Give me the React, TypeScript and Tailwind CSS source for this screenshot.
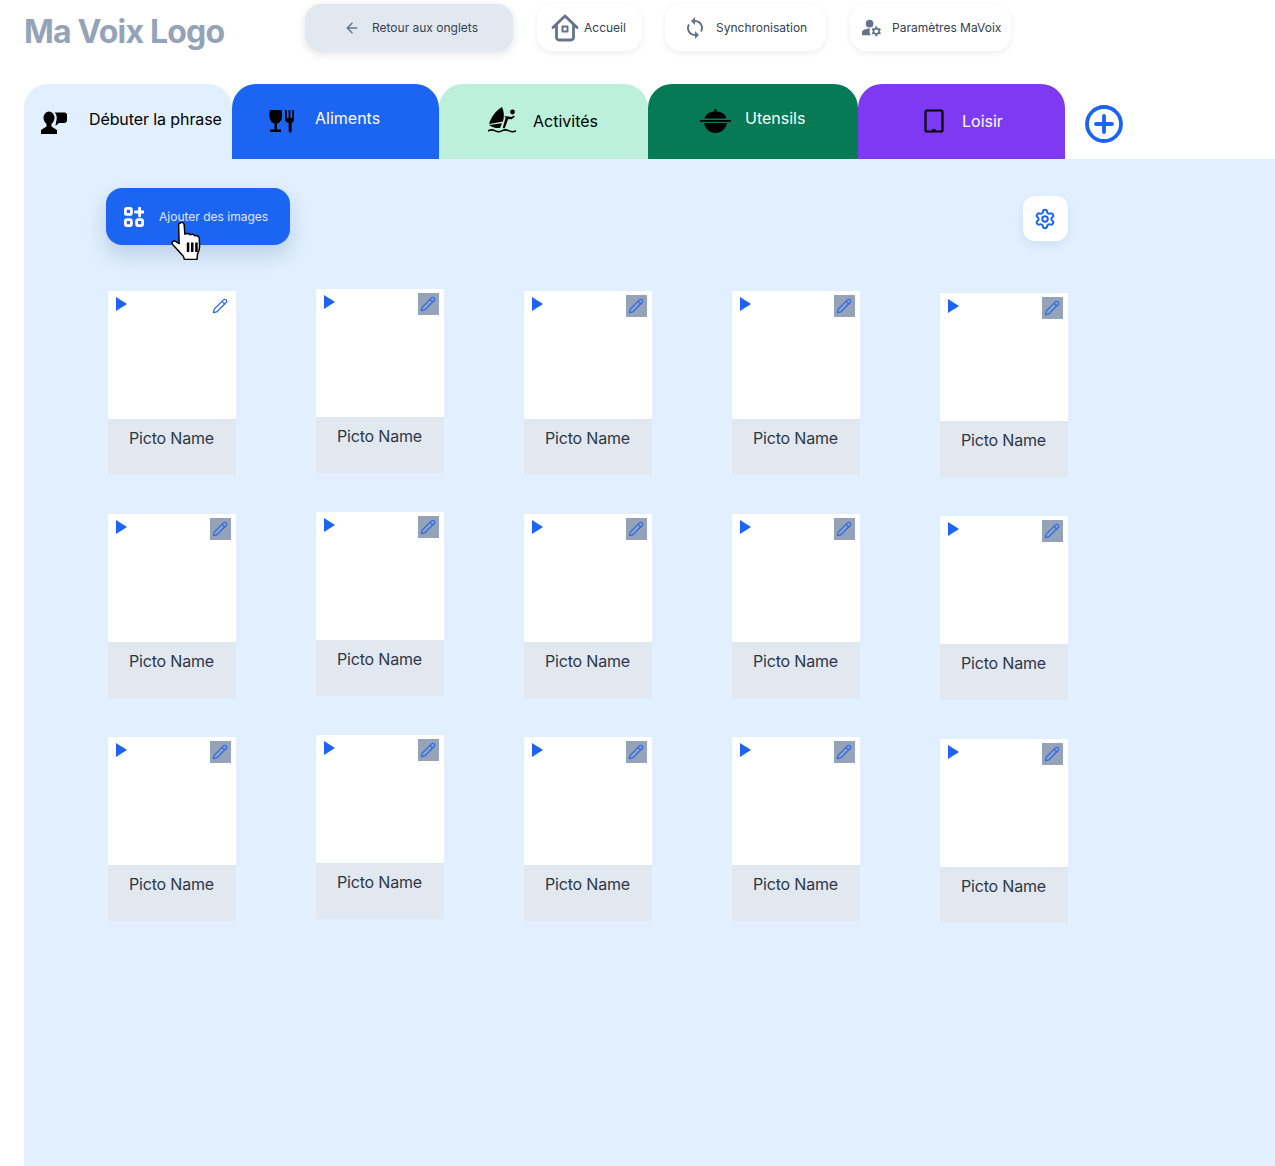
import { ArrowLeft, Pencil, Settings } from "lucide-react";
import { MdSync, MdManageAccounts } from "react-icons/md";
import type { ReactNode } from "react";

const HomeIcon = () => (
  <svg width="28" height="28" viewBox="0 0 28 28" fill="none" stroke="#64748b" strokeWidth="2.800" strokeLinejoin="round" strokeLinecap="round">
    <path d="M2 13.500 14 2l12 11.500" />
    <path d="M5.500 11v12.500a2.500 2.500 0 0 0 2.500 2.500h12a2.500 2.500 0 0 0 2.500-2.500V11" />
    <rect x="11.500" y="12.500" width="5" height="5" strokeWidth="2" />
  </svg>
);

const SpeakerIcon = () => (
  <svg width="26" height="24" viewBox="0 0 26 24" fill="#000" className="mt-[7px]">
    <ellipse cx="8" cy="7" rx="5.500" ry="6.500" />
    <path d="M5.500 12h5v3.500l5.500 3.500V23H0v-4l5.500-3.500z" />
    <path d="M13 1.500h10.500A2.500 2.500 0 0 1 26 4v5a3 3 0 0 1-3 3h-5l-3.500 3 .5-4c1-2 1.500-7-1.500-9.500z" />
  </svg>
);

const FoodIcon = () => (
  <svg width="27" height="24" viewBox="0 0 27 24" fill="#000" className="mt-[5px]">
    <path d="M1 1h11.500c1.500 6 .5 12-4.500 13.500V20.500h4V23H1v-2.500h4.500v-6C.5 13-.5 7 1 1z" />
    <path d="M16 1h1.800v8h1.800V1h1.800v8h1.800V1H25v9.500c0 1.800-1.200 3-2.300 3.400V22a1.500 1.500 0 0 1-3 0v-8.100c-1.500-.4-3.700-1.600-3.700-3.400z" />
  </svg>
);

const SailIcon = () => (
  <svg width="28" height="26" viewBox="0 0 28 26" fill="#000" className="-mt-[1px]">
    <path d="M14 0c2 4 2.500 9 1 14.500L1 17C3 10 8 3.500 14 0z" />
    <path d="M1 18l13-1.800L12 21c-4 .5-8-.8-11-3z" />
    <circle cx="24.500" cy="5" r="2.400" />
    <path d="M16 9l7.500 1 2.500-1.500.7 1.300-3 2.500-3.500-.3-3.500 9.500-2-.5 3-10.500z" />
    <path d="M0 23c3-1.400 4.500-1.400 7 0s4.500 1.400 7 0 4.500-1.400 7 0 4.500 1.400 7 0v1.800c-2.500 1-4.500 1-7-.2s-4.500-1.200-7 0-4.500 1.200-7 0-4.500-1.200-7 .2z" />
  </svg>
);

const PotIcon = () => (
  <svg width="31" height="24" viewBox="0 0 31 24" fill="#000" className="mt-[6px]">
    <rect x="14.500" y="0" width="2" height="3" />
    <path d="M4.500 9.500C5.500 5 10 2.500 15.500 2.500S25.500 5 26.500 9.500z" />
    <rect x="0" y="11" width="31" height="1.800" />
    <path d="M4 14h23c-1 6-6 10-11.500 10S5 20 4 14z" />
  </svg>
);

const TabletIcon = () => (
  <svg width="20" height="24" viewBox="0 0 20 24" fill="none" stroke="#000" strokeWidth="2.200">
    <rect x="1.500" y="1.500" width="17" height="21" rx="1.500" />
    <rect x="8.500" y="20.500" width="3" height="1" fill="#000" strokeWidth="0.500" />
  </svg>
);

const AddGrid = () => (
  <svg width="20" height="20" viewBox="0 0 20 20" fill="none" stroke="#fff" strokeWidth="2.800">
    <rect x="1.400" y="1.400" width="6" height="6" rx="1.500" />
    <rect x="1.400" y="12.600" width="6" height="6" rx="1.500" />
    <rect x="12.600" y="12.600" width="6" height="6" rx="1.500" />
    <path d="M15.600 1v8M11.400 5h8.400" strokeLinecap="round" />
  </svg>
);

const HandCursor = () => (
  <svg width="34" height="42" viewBox="0 0 32 40" className="absolute left-[170px] top-[220px]">
    <path
      d="M9.500 3c1.500-1.500 3.500-.5 3.800 1.500l.7 9c2-.8 4-.5 5 .5 1.500-.7 3.500-.3 4.500 1 2-.6 4 .6 4.200 2.500l.3 8c0 3-1 5-2 7l-.5 5H13.500l-1-3c-3-3-6-7-10-11-1.500-2 0-4 2-3.500l4 2.500-.5-18c0-1 .8-1.500 1.500-1.500z"
      fill="#fff"
      stroke="#000"
      strokeWidth="1.400"
      strokeLinejoin="round"
    />
    <path d="M17 21.500v9M21 21.500v9M25 21.500v9" stroke="#000" strokeWidth="2.400" />
  </svg>
);

function TopButton({ icon, label, className }: { icon: ReactNode; label: string; className: string }) {
  return (
    <button className={`flex h-[47px] items-center rounded-2xl shadow-[0_2px_6px_rgba(15,23,42,0.08)] ${className}`}>
      {icon}
      <span className="text-xs text-[#334155]">{label}</span>
    </button>
  );
}

function Tab({ className, icon, label }: { className: string; icon: ReactNode; label: string }) {
  return (
    <div className={`flex h-[75px] items-center rounded-t-3xl text-base font-normal ${className}`}>
      {icon}
      <span>{label}</span>
    </div>
  );
}

function Card({ first }: { first?: boolean }) {
  return (
    <div className="flex h-[184px] w-32 flex-col">
      <div className="relative h-32 bg-white">
        <svg width="11" height="14" viewBox="0 0 11 14" className="absolute left-2 top-[6px]">
          <path d="M0 0l11 7-11 7z" fill="#1c64f2" />
        </svg>
        <div className={`absolute left-[102px] top-1 flex h-[22px] w-[21px] items-center justify-center pr-[1px] ${first ? "" : "bg-[#94a3b8]"}`}>
          <Pencil size={16} color="#2f6cf0" strokeWidth={1.9} />
        </div>
      </div>
      <div className="h-14 bg-[#e2e8f0] pr-[1px] pt-[7px] text-center text-base leading-6 tracking-[-0.2px] text-[#2d3748]">Picto Name</div>
    </div>
  );
}

function Column({ offset, firstCard }: { offset: string; firstCard?: boolean }) {
  return (
    <div className={`flex flex-col gap-[39px] ${offset}`}>
      <Card first={firstCard} />
      <Card />
      <Card />
    </div>
  );
}

export default function App() {
  return (
    <div className="relative h-[1166px] w-[1275px] overflow-hidden bg-white font-['Inter',sans-serif]">
      <header className="flex h-[84px] pl-6">
        <div className="w-[281px] pt-[10px] text-[32px] font-bold leading-[44px] tracking-[-0.8px] text-[#94a3b8]">Ma Voix Logo</div>
        <div className="flex items-start gap-6 pt-1">
          <TopButton
            className="w-[208px] gap-[12px] bg-[#e2e8f0] pl-[39px] shadow-[0_3px_8px_rgba(15,23,42,0.12)]"
            icon={<ArrowLeft size={16} color="#64748b" strokeWidth={2.200} />}
            label="Retour aux onglets"
          />
          <TopButton className="w-[105px] gap-[5px] bg-white pl-[14px]" icon={<HomeIcon />} label="Accueil" />
          <TopButton
            className="-ml-[1px] w-[161px] gap-[9px] bg-white pl-[18px]"
            icon={<MdSync size={24} color="#64748b" />}
            label="Synchronisation"
          />
          <TopButton
            className="w-[161px] gap-[9px] bg-white pl-[10px]"
            icon={<MdManageAccounts size={23} color="#64748b" />}
            label="Paramètres MaVoix"
          />
        </div>
      </header>

      <div className="flex h-[75px] items-center pl-6">
        <Tab className="w-[208px] gap-[22px] bg-[#e1effe] pb-[5px] pl-[17px] tracking-[-0.1px] text-black" icon={<SpeakerIcon />} label="Débuter la phrase" />
        <Tab className="w-[207px] gap-[19px] bg-[#1c64f2] pb-[7px] pl-[37px] text-white" icon={<FoodIcon />} label="Aliments" />
        <Tab className="w-[209px] gap-[17px] bg-[#bcf0da] pb-[2px] pl-[49px] text-black" icon={<SailIcon />} label="Activités" />
        <Tab className="w-[210px] gap-[14px] bg-[#057a55] pb-[7px] pl-[52px] text-white" icon={<PotIcon />} label="Utensils" />
        <Tab className="w-[207px] gap-[18px] bg-[#7e3af2] pb-[2px] pl-[66px] text-white" icon={<TabletIcon />} label="Loisir" />
        <svg width="38" height="38" viewBox="0 0 38 38" fill="none" stroke="#1c64f2" strokeWidth="3.800" strokeLinecap="round" className="ml-[20px] mt-[5px]">
          <circle cx="19" cy="19" r="17" />
          <path d="M19 11v16M11 19h16" />
        </svg>
      </div>

      <main className="ml-6 h-[1007px] bg-[#e1effe] pl-[82px] pt-[29px]">
        <div className="flex w-[962px] items-start justify-between">
          <button className="flex h-[57px] w-[184px] items-center gap-[15px] rounded-2xl bg-[#1c64f2] pl-[18px] shadow-[0_10px_20px_rgba(30,64,120,0.18)]">
            <AddGrid />
            <span className="text-xs text-[#e2e8f0]">Ajouter des images</span>
          </button>
          <button className="mt-2 flex h-[45px] w-[45px] items-center justify-center rounded-xl bg-white pr-[1px] shadow-[0_4px_10px_rgba(30,64,120,0.08)]">
            <Settings size={22} color="#1c64f2" strokeWidth={2.200} />
          </button>
        </div>
        <div className="ml-[2px] flex items-start gap-20 pt-[44px]">
          <Column offset="mt-[2px]" firstCard />
          <Column offset="mt-0" />
          <Column offset="mt-[2px]" />
          <Column offset="mt-[2px]" />
          <Column offset="mt-1" />
        </div>
      </main>
      <HandCursor />
    </div>
  );
}
